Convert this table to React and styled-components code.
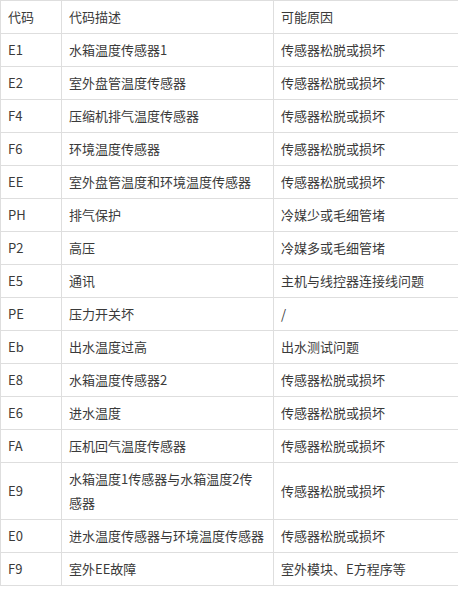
import React from 'react';
import styled, { createGlobalStyle } from 'styled-components';

const GlobalStyle = createGlobalStyle`
  html, body {
    margin: 0;
    padding: 0;
    background: #fff;
  }
`;

const Table = styled.table`
  width: 458px;
  border-collapse: collapse;
  table-layout: fixed;
  font-family: "Noto Sans CJK SC", "Noto Sans", sans-serif;
  font-size: 13px;
  color: #3a3a3a;
`;

const Cell = styled.td`
  border: 1px solid #dedede;
  padding: 4px 7px;
  line-height: 24px;
  vertical-align: middle;
  word-break: break-all;
  white-space: pre-line;
`;

const HeadCell = styled(Cell).attrs({ as: 'th' })`
  font-weight: normal;
  text-align: left;
`;

const rows = [
  ['E1', '水箱温度传感器1', '传感器松脱或损坏'],
  ['E2', '室外盘管温度传感器', '传感器松脱或损坏'],
  ['F4', '压缩机排气温度传感器', '传感器松脱或损坏'],
  ['F6', '环境温度传感器', '传感器松脱或损坏'],
  ['EE', '室外盘管温度和环境温度传感器', '传感器松脱或损坏'],
  ['PH', '排气保护', '冷媒少或毛细管堵'],
  ['P2', '高压', '冷媒多或毛细管堵'],
  ['E5', '通讯', '主机与线控器连接线问题'],
  ['PE', '压力开关坏', '/'],
  ['Eb', '出水温度过高', '出水测试问题'],
  ['E8', '水箱温度传感器2', '传感器松脱或损坏'],
  ['E6', '进水温度', '传感器松脱或损坏'],
  ['FA', '压机回气温度传感器', '传感器松脱或损坏'],
  ['E9', '水箱温度1传感器与水箱温度2传\n感器', '传感器松脱或损坏'],
  ['E0', '进水温度传感器与环境温度传感器', '传感器松脱或损坏'],
  ['F9', '室外EE故障', '室外模块、E方程序等'],
];

export default function App() {
  return (
    <>
      <GlobalStyle />
      <Table>
        <colgroup>
          <col style={{ width: 61 }} />
          <col style={{ width: 212 }} />
          <col style={{ width: 185 }} />
        </colgroup>
        <thead>
          <tr>
            <HeadCell>代码</HeadCell>
            <HeadCell>代码描述</HeadCell>
            <HeadCell>可能原因</HeadCell>
          </tr>
        </thead>
        <tbody>
          {rows.map(([code, desc, cause]) => (
            <tr key={code}>
              <Cell>{code}</Cell>
              <Cell>{desc}</Cell>
              <Cell>{cause}</Cell>
            </tr>
          ))}
        </tbody>
      </Table>
    </>
  );
}
